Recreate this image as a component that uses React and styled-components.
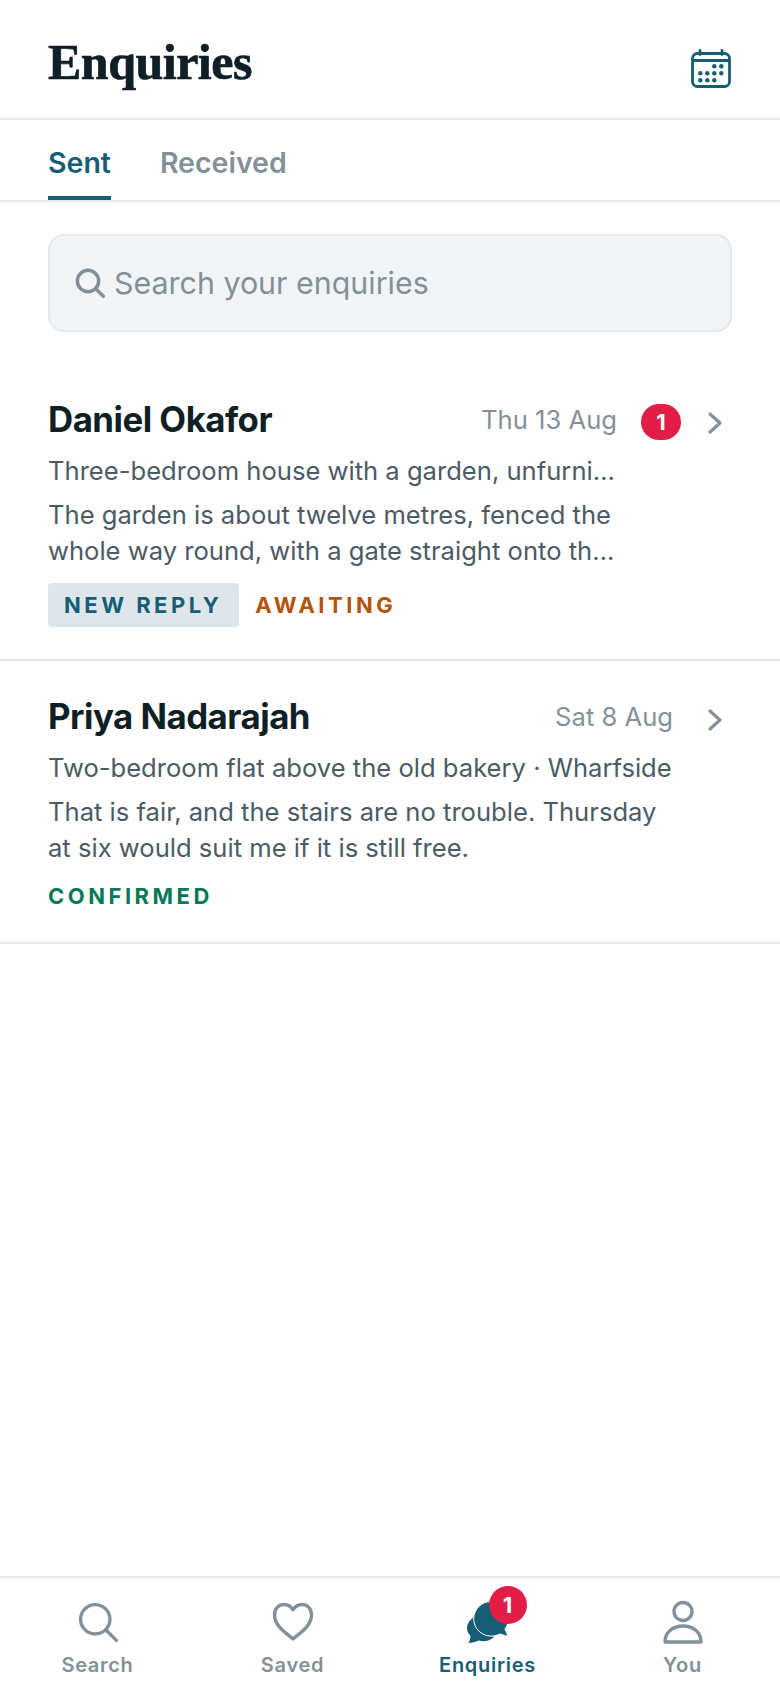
import React from 'react'
import styled, { createGlobalStyle } from 'styled-components'

const GlobalStyle = createGlobalStyle`
  html, body { margin: 0; padding: 0; background: #fff; }
  body { font-family: Inter, "Liberation Sans", sans-serif; }
  * { box-sizing: border-box; }
`

const teal = '#155e75'
const grey = '#829199'

function CalendarIcon() {
  return (
    <svg width="40" height="40" viewBox="0 0 40 40" fill="none">
      <rect x="1.500" y="4.500" width="37" height="33" rx="5" stroke={teal} strokeWidth="2.800" />
      <path d="M1.500 11.500h37" stroke={teal} strokeWidth="2.800" />
      <path d="M9 1.500v4M31 1.500v4" stroke={teal} strokeWidth="2.800" strokeLinecap="round" />
      {[[23.300, 17.200], [30.300, 17.200], [9.300, 24.200], [16.300, 24.200], [23.300, 24.200], [30.300, 24.200], [9.300, 31.200], [16.300, 31.200], [23.300, 31.200]].map(([cx, cy]) => (
        <circle key={cx + '-' + cy} cx={cx} cy={cy} r="2.200" fill={teal} />
      ))}
    </svg>
  )
}

function SearchGlyph({ size, width }) {
  return (
    <svg width={size} height={size} viewBox="0 0 24 24" fill="none" stroke={grey} strokeWidth={width} strokeLinecap="round">
      <circle cx="10.500" cy="10.500" r="8" />
      <path d="M16.500 16.500L22 22" />
    </svg>
  )
}

function Chevron() {
  return (
    <svg width="16" height="24" viewBox="0 0 16 24" fill="none" stroke={grey} strokeWidth="3.200" strokeLinecap="round" strokeLinejoin="round">
      <path d="M3 3l10 9-10 9" />
    </svg>
  )
}

function HeartIcon() {
  return (
    <svg width="42" height="40" viewBox="0 0 42 40" fill="none" stroke={grey} strokeWidth="3.400" strokeLinejoin="round">
      <path d="M21 37C14 31 2.500 24 2.500 13C2.500 6.500 6.500 2.500 12 2.500C15.800 2.500 19 4.500 21 8C23 4.500 26.200 2.500 30 2.500C35.500 2.500 39.500 6.500 39.500 13C39.500 24 28 31 21 37Z" />
    </svg>
  )
}

function PersonIcon() {
  return (
    <svg width="42" height="44" viewBox="0 0 42 44" fill="none" stroke={grey} strokeWidth="3.400" strokeLinejoin="round">
      <circle cx="21" cy="11.500" r="9" />
      <path d="M3 42C3 32 11 26 21 26C31 26 39 32 39 42Z" />
    </svg>
  )
}

function ChatIcon() {
  return (
    <svg width="42" height="43" viewBox="0 0 42 43">
      <path d="M7 16C2 19.500 0 23.500 0 27C0 30 1.500 33 3.500 35C3.500 37.500 2.500 40 1.500 42C5 42 9 41 11.500 39.500C17 41 23 40 27 36L14 20Z" fill={teal} />
      <path d="M24 .5A17.300 17.300 0 0 0 6.700 17.800A17.300 17.300 0 0 0 24 35.100C27.500 35.100 30.500 34.200 33 33C36 34 39 35 41.500 35C39.800 32.500 38.500 30 38 28C40.300 25 41.300 21.500 41.300 17.800A17.300 17.300 0 0 0 24 .5Z" fill={teal} stroke="#fff" strokeWidth="1" />
    </svg>
  )
}

const rows = [
  {
    name: 'Daniel Okafor',
    date: 'Thu 13 Aug',
    unread: 1,
    subject: 'Three-bedroom house with a garden, unfurni…',
    body: 'The garden is about twelve metres, fenced the whole way round, with a gate straight onto th…',
    tags: [{ label: 'NEW REPLY', kind: 'reply' }, { label: 'AWAITING', kind: 'awaiting' }],
  },
  {
    name: 'Priya Nadarajah',
    date: 'Sat 8 Aug',
    subject: 'Two-bedroom flat above the old bakery · Wharfside',
    body: 'That is fair, and the stairs are no trouble. Thursday at six would suit me if it is still free.',
    tags: [{ label: 'CONFIRMED', kind: 'confirmed' }],
  },
]

export default function App() {
  return (
    <Page>
      <GlobalStyle />
      <Header>
        <Title>Enquiries</Title>
        <HeaderIcon><CalendarIcon /></HeaderIcon>
      </Header>
      <Tabs>
        <Tab $active>Sent</Tab>
        <Tab>Received</Tab>
      </Tabs>
      <SearchWrap>
        <SearchBox>
          <SearchGlyph size={32} width={2.600} />
          <span>Search your enquiries</span>
        </SearchBox>
      </SearchWrap>
      <List>
        {rows.map(row => (
          <Row key={row.name}>
            <TopLine>
              <Name>{row.name}</Name>
              <DateText $plain={!row.unread}>{row.date}</DateText>
              {row.unread && <Count>{row.unread}</Count>}
              <ChevronWrap><Chevron /></ChevronWrap>
            </TopLine>
            <Subject>{row.subject}</Subject>
            <Body $narrow={!!row.unread}>{row.body}</Body>
            <Tags>
              {row.tags.map(tag => <Tag key={tag.label} $kind={tag.kind}>{tag.label}</Tag>)}
            </Tags>
          </Row>
        ))}
      </List>
      <Nav>
        <NavItem>
          <IconSlot><SearchGlyph size={44} width={1.850} /></IconSlot>
          <NavLabel>Search</NavLabel>
        </NavItem>
        <NavItem>
          <IconSlot><HeartIcon /></IconSlot>
          <NavLabel>Saved</NavLabel>
        </NavItem>
        <NavItem>
          <IconSlot>
            <ChatIcon />
            <NavBadge>1</NavBadge>
          </IconSlot>
          <NavLabel $active>Enquiries</NavLabel>
        </NavItem>
        <NavItem>
          <IconSlot><PersonIcon /></IconSlot>
          <NavLabel>You</NavLabel>
        </NavItem>
      </Nav>
    </Page>
  )
}

const Page = styled.div`
  width: 780px;
  height: 1688px;
  display: flex;
  flex-direction: column;
  background: #fff;
  overflow: hidden;
`

const Header = styled.header`
  height: 120px;
  flex: none;
  display: flex;
  align-items: center;
  justify-content: space-between;
  padding: 6px 49px 0 48px;
  border-bottom: 2px solid #e2e8ec;
`

const HeaderIcon = styled.div`
  display: flex;
  margin-top: 14px;
`

const Title = styled.h1`
  margin: 0;
  font-family: "Liberation Serif", serif;
  font-weight: 700;
  font-size: 50px;
  letter-spacing: -0.5px;
  color: #0f1f26;
  -webkit-text-stroke: 0.7px #0f1f26;
`

const Tabs = styled.nav`
  height: 82px;
  flex: none;
  display: flex;
  gap: 49px;
  padding: 0 48px;
  border-bottom: 2px solid #e2e8ec;
`

const Tab = styled.div`
  display: flex;
  align-items: center;
  height: 80px;
  padding-top: 9px;
  font-size: 28.500px;
  font-weight: 600;
  color: ${props => (props.$active ? teal : grey)};
  border-bottom: 4px solid ${props => (props.$active ? teal : 'transparent')};
`

const SearchWrap = styled.div`
  padding: 32px 48px;
`

const SearchBox = styled.div`
  height: 98px;
  display: flex;
  align-items: center;
  gap: 8px;
  padding: 0 24px;
  background: #f1f5f7;
  border: 2px solid #e2e8ec;
  border-radius: 16px;
  font-size: 30.400px;
  color: ${grey};
`

const List = styled.div`
  flex: 1;
`

const Row = styled.article`
  padding: 34px 48px 32px;
  border-bottom: 2px solid #e2e8ec;
`

const TopLine = styled.div`
  display: flex;
  align-items: center;
`

const Name = styled.div`
  flex: 1;
  font-size: 34.800px;
  font-weight: 700;
  letter-spacing: -0.5px;
  color: #0f1f26;
`

const DateText = styled.div`
  font-size: 25.600px;
  color: ${grey};
  margin-right: ${props => (props.$plain ? '8px' : '0')};
`

const Count = styled.div`
  width: 40px;
  height: 36px;
  margin: 6px 0 0 24px;
  display: flex;
  align-items: center;
  justify-content: center;
  border-radius: 18px;
  background: #e11d48;
  color: #fff;
  font-size: 22px;
  font-weight: 700;
`

const ChevronWrap = styled.div`
  display: flex;
  margin: 7px 9px 0 26px;
`

const Subject = styled.div`
  margin-top: 13px;
  font-size: 25.600px;
  line-height: 36px;
  color: #4b5b66;
`

const Body = styled.div`
  margin-top: 8px;
  width: ${props => (props.$narrow ? '572px' : '632px')};
  font-size: 25.600px;
  line-height: 36px;
  color: #4b5b66;
`

const Tags = styled.div`
  margin-top: 14px;
  display: flex;
  align-items: center;
  gap: 16px;
`

const tagColours = { reply: teal, awaiting: '#b45309', confirmed: '#047857' }

const Tag = styled.span`
  height: ${props => (props.$kind === 'reply' ? '44px' : '28px')};
  margin-top: ${props => (props.$kind === 'confirmed' ? '2px' : '0')};
  display: flex;
  align-items: center;
  padding: ${props => (props.$kind === 'reply' ? '0 17px 0 16px' : '0')};
  border-radius: 4px;
  background: ${props => (props.$kind === 'reply' ? '#dee6eb' : 'transparent')};
  font-size: 22px;
  font-weight: 700;
  letter-spacing: 3.500px;
  color: ${props => tagColours[props.$kind]};
`

const Nav = styled.nav`
  flex: none;
  height: 112px;
  display: grid;
  grid-template-columns: repeat(4, 1fr);
  border-top: 2px solid #e2e8ec;
`

const NavItem = styled.div`
  display: flex;
  flex-direction: column;
  align-items: center;
  padding-top: 22px;
`

const IconSlot = styled.div`
  position: relative;
  height: 44px;
  display: flex;
  align-items: center;
  justify-content: center;
`

const NavBadge = styled.span`
  position: absolute;
  top: -14px;
  right: -18px;
  width: 38px;
  height: 38px;
  border-radius: 50%;
  background: #e11d48;
  color: #fff;
  display: flex;
  align-items: center;
  justify-content: center;
  font-size: 22px;
  font-weight: 700;
`

const NavLabel = styled.div`
  margin-top: 9px;
  font-size: 20px;
  font-weight: 600;
  letter-spacing: 0.700px;
  color: ${props => (props.$active ? teal : grey)};
`
